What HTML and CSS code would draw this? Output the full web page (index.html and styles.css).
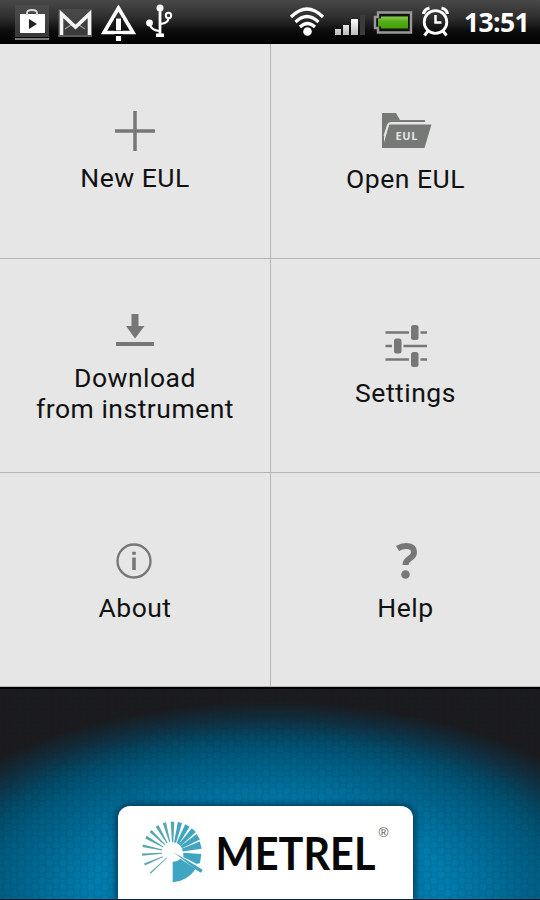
FILE: index.html
```html
<!DOCTYPE html>
<html lang="en">
<head>
<meta charset="UTF-8">
<meta name="viewport" content="width=device-width, initial-scale=1.0">
<title>Metrel EUL</title>
<link rel="stylesheet" href="styles.css">
</head>
<body>
<header class="statusbar">
  <svg class="notifications" width="190" height="44" viewBox="0 0 190 44">
    <rect class="tile" x="15" y="5" width="34" height="32"/>
    <path d="M15 39h34" stroke="#777" stroke-width="2"/>
    <path d="M20 14h25v19H20z" fill="#fff"/>
    <path d="M27 15v-2q0-3 5-3t5 3v2" fill="none" stroke="#ddd" stroke-width="1.8"/>
    <path d="M29 19v10l8-5z" fill="#222"/>
    <rect class="tile" x="58" y="9" width="34" height="26"/>
    <path d="M58 36h34" stroke="#777" stroke-width="1.5"/>
    <path d="M65 29l6-4M85 29l-6-4" stroke="#999" stroke-width="1.3"/>
    <path d="M61.500 35V14L75.500 27L89.500 14V35" fill="none" stroke="#f5f5f5" stroke-width="3.600"/>
    <path d="M118.500 8L104 32.500h29z" fill="none" stroke="#fff" stroke-width="3.600"/>
    <path d="M118.500 18v22" stroke="#111" stroke-width="8"/>
    <path d="M118.500 18.500v12M118.500 36v5" stroke="#fff" stroke-width="5"/>
    <path d="M113 32.500h11" stroke="#fff" stroke-width="3"/>
    <g fill="none" stroke="#fff" stroke-width="2">
      <path d="M160 8v26" stroke-width="2.800"/>
      <path d="M149.500 23q1 7 9.500 8M160.500 24q8-1 8-6"/>
      <circle cx="168.500" cy="15.500" r="2.700"/>
    </g>
    <circle cx="160" cy="8" r="3.500" fill="#fff"/>
    <circle cx="149.500" cy="23" r="3.400" fill="#fff"/>
    <path d="M156 33.500h8v3.500h-8z" fill="#fff"/>
  </svg>
  <div class="system">
    <svg width="170" height="44" viewBox="288 0 170 44">
      <g fill="none" stroke="#fff" stroke-width="3.200">
        <path d="M291 17q16-16 32 0"/>
        <path d="M295.500 22q11.500-11 23 0"/>
        <path d="M300 27q7.500-7 15 0"/>
      </g>
      <circle cx="307.500" cy="31.500" r="4.300" fill="#fff"/>
      <g fill="url(#bars)">
        <path d="M335 29h6v6h-6zM343 25h6v10h-6zM351 19h7v16h-7z"/>
      </g>
      <path d="M360 15h5v20h-5z" fill="#3b3b3b"/>
      <path d="M378 12.500h33v20h-33v-4.500h-3v-11h3z" fill="#111" stroke="#999" stroke-width="2.400"/>
      <path d="M381 16.500h27v12h-27v-2h-3v-8h3z" fill="url(#charge)"/>
      <g fill="none" stroke="#fff">
        <circle cx="435.500" cy="22" r="11.300" stroke-width="2.800"/>
        <path d="M435.500 15v7.500h6" stroke-width="2.500"/>
        <path d="M423.500 14q1-5 6-6M447.500 14q-1-5-6-6" stroke-width="3.300"/>
        <path d="M428 31l-3.500 4.500M443 31l3.500 4.500" stroke-width="3"/>
      </g>
      <defs>
        <linearGradient id="bars" x1="0" y1="0" x2="0" y2="1"><stop offset="0" stop-color="#fff"/><stop offset="1" stop-color="#bbb"/></linearGradient>
        <linearGradient id="charge" x1="0" y1="0" x2="0" y2="1"><stop offset="0" stop-color="#8bd050"/><stop offset=".4" stop-color="#55ad1b"/><stop offset="1" stop-color="#42a107"/></linearGradient>
      </defs>
    </svg>
    <span class="clock">13:51</span>
  </div>
</header>

<main class="menu">
  <a class="item new">
    <svg class="icon" viewBox="0 0 56 48"><path d="M28 4v40M8 24h40" stroke="#777" stroke-width="3.500"/></svg>
    <span>New EUL</span>
  </a>
  <a class="item open">
    <svg class="icon" viewBox="0 0 56 48">
      <path d="M4 41V6h14l4 7h25v4H13q-2 0-3 2L6 30v11z" fill="#777976"/>
      <path d="M4.500 41L11 17.500h42.500L46.500 41z" fill="#777976"/>
      <path d="M6.500 29l3.500-11q.7-2 3-2h34" fill="none" stroke="#e6e6e6" stroke-width="2"/>
      <text x="17.500" y="33" class="folder-text" textLength="22">EUL</text>
    </svg>
    <span>Open EUL</span>
  </a>
  <a class="item download">
    <svg class="icon" viewBox="0 0 56 48"><path d="M24.500 7h7v12h6L28 31.500 19 19h5.500zM9 35h38v4H9z" fill="#777"/></svg>
    <span>Download<br>from instrument</span>
  </a>
  <a class="item">
    <svg class="icon" viewBox="0 0 56 48">
      <path d="M7.500 10.500H31M42.500 10.500H49M7.500 24H14M25.500 24H49M7.500 37.500H31M42.500 37.500H49" stroke="#777" stroke-width="2.500"/>
      <g fill="#777"><rect x="33" y="3" width="7.500" height="15" rx="2.500"/><rect x="16" y="16.500" width="7.500" height="15" rx="2.500"/><rect x="33" y="30" width="7.500" height="15" rx="2.500"/></g>
    </svg>
    <span>Settings</span>
  </a>
  <a class="item about">
    <svg class="icon" viewBox="0 0 56 48">
      <circle cx="27" cy="24" r="16.500" fill="none" stroke="#777" stroke-width="2.300"/>
      <path d="M25.200 14.800h3.600v3h-3.600zM25.200 20.500h3.600v12.500h-3.600z" fill="#777"/>
    </svg>
    <span>About</span>
  </a>
  <a class="item about">
    <svg class="icon" viewBox="0 0 56 48">
      <path d="M19.500 11.500q4.500-2.700 9-2.500 7.500.3 7.500 6 0 3.800-4 6.200-4.500 2.600-4.500 6.800" fill="none" stroke="#777" stroke-width="6"/>
      <circle cx="27.500" cy="37.500" r="4.300" fill="#777"/>
    </svg>
    <span>Help</span>
  </a>
</main>

<footer class="brand">
  <div class="card">
    <svg width="296" height="93" viewBox="118 806 296 93">
      <g transform="translate(110 795) scale(.3333)" fill="#40a5c2">
        <g fill="#58a6ae">
          <path d="M186 142l-4-62h11l-3 62z"/>
          <path d="M186 140l-4-60h10l-3 60z" transform="rotate(-15 188 172)"/>
          <path d="M186 140l-4-60h10l-3 60z" transform="rotate(-30 188 172)"/>
          <path d="M186 140l-4-60h9l-2 60z" transform="rotate(-45 188 172)"/>
          <path d="M186 140l-3-60h9l-3 60z" transform="rotate(-60 188 172)"/>
          <path d="M186 140l-3-60h8l-2 60z" transform="rotate(-77 188 172)"/>
          <path d="M186 140l-2-60h7l-2 60z" transform="rotate(-94 188 172)"/>
          <path d="M186 140l-2-60h7l-2 60z" transform="rotate(-113 188 172)"/>
          <path d="M187 148l-1-68h4l-1 68z" transform="rotate(-133 188 172)"/>
        </g>
        <path d="M185 142l-4-62h13l-3 62z" transform="rotate(14 188 172)"/>
        <path d="M185 142l-5-62h15l-3 62z" transform="rotate(29 188 172)"/>
        <path d="M184 142l-5-62h17l-4 62z" transform="rotate(44 188 172)"/>
        <path d="M184 142l-6-60h19l-5 60z" transform="rotate(59 188 172)"/>
        <path d="M184 142l-8-57h23l-6 57z" transform="rotate(76 188 172)"/>
        <path d="M220 173l54 4-4 27-9 3-41-21z"/>
        <path d="M188 200q14 0 23-9l46 31q-25 37-69 40z"/>
        <path d="M190 171l88 53-5 9-14-8z"/>
      </g>
      <text class="wordmark" x="215.500" y="869.500" textLength="160" lengthAdjust="spacingAndGlyphs">METREL</text>
      <text class="registered" x="378.500" y="836.500">®</text>
    </svg>
  </div>
</footer>
</body>
</html>
```
FILE: styles.css
```css
body {
  margin: 0;
  height: 900px;
  display: flex;
  flex-direction: column;
  overflow: hidden;
  background: #000;
  font-family: Roboto, sans-serif;
}

.statusbar {
  height: 44px;
  display: flex;
  justify-content: space-between;
  background: linear-gradient(#484848, #2e2e2e 40%, #0c0c0c 70%, #000);
}

.statusbar svg {
  display: block;
}

.tile {
  fill: #505050;
  opacity: 0.7;
}

.system {
  display: flex;
  align-items: center;
}

.clock {
  width: 76px;
  margin-left: 6px;
  color: #fff;
  font: bold 26.5px/44px "Open Sans", sans-serif;
  letter-spacing: -0.6px;
}

.menu {
  height: 643px;
  display: grid;
  grid-template-columns: 271px 269px;
  grid-template-rows: 215px 214px 214px;
  background: #e6e6e6;
}

.item {
  box-sizing: border-box;
  display: flex;
  flex-direction: column;
  align-items: center;
  justify-content: center;
  gap: 7px;
  border-bottom: 1px solid #b5b5b5;
  color: #111;
  font-size: 26.5px;
  line-height: 32px;
  letter-spacing: 0.5px;
  text-align: center;
}

.item:nth-child(odd) {
  border-right: 1px solid #b5b5b5;
}

.icon {
  width: 56px;
  height: 48px;
}

.new {
  padding-bottom: 2px;
}

.open {
  gap: 8px;
  padding-bottom: 1px;
}

.download {
  line-height: 31px;
  padding-bottom: 1px;
}

.about {
  padding-top: 1px;
}

.folder-text {
  fill: #e6e6e6;
  font: bold 11px "Open Sans", sans-serif;
  letter-spacing: 0;
}

.brand {
  height: 213px;
  box-sizing: border-box;
  display: flex;
  align-items: flex-end;
  padding: 0 0 1px 118px;
  border-top: 2px solid #000;
  /* fine honeycomb dots over the blue glow */
  background:
    radial-gradient(circle, transparent 3px, rgba(0, 35, 55, 0.12) 4px, transparent 5.5px) 0 0 / 14px 12px,
    radial-gradient(circle, transparent 3px, rgba(0, 35, 55, 0.12) 4px, transparent 5.5px) 7px 6px / 14px 12px,
    radial-gradient(ellipse 400px 205px at 270px 100%, #0080b4 0, #007dae 45%, #006993 60%, #005a7e 71%, #034a67 79%, #102f40 88%, #1b1a1d 97%);
  box-shadow: inset 0 -1px #00131f;
}

.card {
  width: 295px;
  height: 93px;
  border-radius: 12px 12px 0 0;
  background: #fff;
  box-shadow: 0 0 7px 2px #003957;
}

.card svg {
  display: block;
}

.wordmark {
  fill: #080808;
  font: bold 46.5px Lato, sans-serif;
}

.registered {
  fill: #555;
  font: 13.5px "Liberation Sans", sans-serif;
}
```
